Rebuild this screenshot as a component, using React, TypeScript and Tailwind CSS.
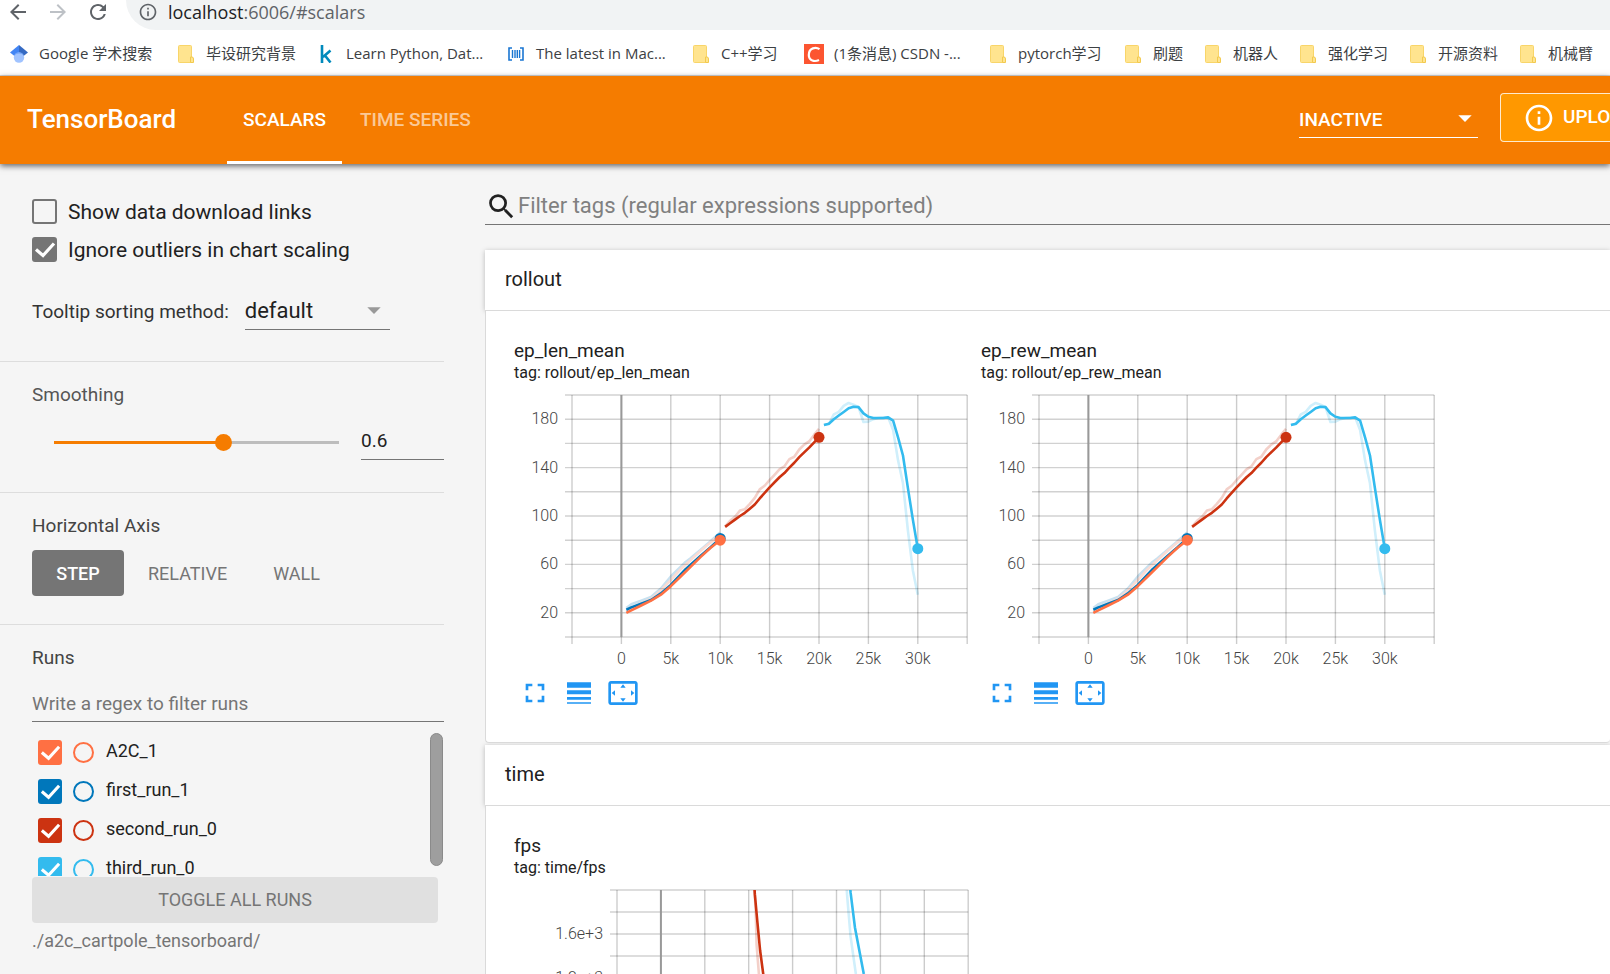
import { useState } from "react";
import type { ReactNode } from "react";
import {
  MdArrowBack,
  MdArrowDropDown,
  MdArrowForward,
  MdFullscreen,
  MdInfoOutline,
  MdLineWeight,
  MdRefresh,
  MdSearch,
  MdSettingsOverscan,
} from "react-icons/md";

type Point = [number, number];

type Series = {
  color: string;
  faded: string;
  raw: Point[];
  smooth: Point[];
  dot?: boolean;
};

type Axis = {
  left: number;
  stepX: number;
  stepY: number;
  rows: number;
  // value of the bottom line and value between two lines
  minY: number;
  unitY: number;
  labelsY: [number, string][];
};

const RUNS = [
  { name: "A2C_1", box: "bg-[#ff7043]", ring: "border-[#ff7043]" },
  { name: "first_run_1", box: "bg-[#0077bb]", ring: "border-[#0077bb]" },
  { name: "second_run_0", box: "bg-[#cc3311]", ring: "border-[#cc3311]" },
  { name: "third_run_0", box: "bg-[#33bbee]", ring: "border-[#33bbee]" },
];

const ROLLOUT: Series[] = [
  {
    color: "#0077bb",
    faded: "#c8e1f0",
    dot: true,
    raw: [[0.5, 24], [1, 27], [2, 30], [3, 33], [4, 40], [5, 50], [6.5, 62], [7, 65], [8, 72], [9, 79], [10, 86.5]],
    smooth: [[0.5, 22.5], [1, 24.5], [2, 27.5], [3, 30.5], [4, 36], [5, 43], [6.5, 56], [8, 67], [9, 74], [10, 81.5]],
  },
  {
    color: "#ff7043",
    faded: "#fbdcd4",
    dot: true,
    raw: [[0.5, 21], [2, 28], [3, 31.5], [4, 38.5], [5, 47], [6, 56], [7, 63.5], [8, 71], [9, 78], [10, 84.5]],
    smooth: [[0.5, 20], [1, 22], [2, 26], [3, 30], [4, 35], [5, 42], [6, 50], [7, 58], [8, 66], [9, 73.5], [10, 80]],
  },
  {
    color: "#cc3311",
    faded: "#f3d0c9",
    dot: true,
    raw: [
      [10.5, 91.5], [11, 96], [11.5, 99.3], [12, 104.5], [12.5, 105.6], [13, 110], [13.5, 115], [14, 122],
      [14.5, 125], [15, 129.6], [15.5, 134], [16, 138.5], [16.5, 141], [17, 147], [17.5, 149], [18, 155],
      [18.5, 159], [19, 161.6], [19.5, 167], [20, 172],
    ],
    smooth: [
      [10.5, 91], [11, 94], [11.5, 97], [12, 100], [12.5, 102.6], [13, 106], [13.5, 109.5], [14, 114.5],
      [15, 123.6], [16, 132], [16.5, 135.5], [17, 140], [17.5, 144], [18, 148.7], [19, 156.5], [20, 165],
    ],
  },
  {
    color: "#33bbee",
    faded: "#d0effb",
    dot: true,
    raw: [
      [20.5, 175.2], [21, 176], [21.5, 184], [22, 186], [22.5, 191], [23, 193.4], [23.5, 192], [24, 190],
      [24.5, 177.7], [25, 178], [25.5, 180], [26, 181], [27, 181.5], [27.5, 171], [28, 146], [28.5, 127],
      [29, 88], [29.5, 55], [30, 35],
    ],
    smooth: [
      [20.5, 175.2], [21, 176.3], [21.5, 180], [22, 183], [22.5, 186], [23, 189], [23.5, 190.3], [24, 190],
      [24.5, 184.8], [25, 182], [25.5, 181], [26.5, 181], [27, 181.5], [27.5, 178.8], [28, 165], [28.5, 150],
      [29, 123], [29.5, 97], [30, 73],
    ],
  },
];

const FPS: Series[] = [
  {
    color: "#cc3311",
    faded: "#f3d0c9",
    raw: [[10.6, 2100], [10.8, 1800], [10.9, 1500], [11.2, 1200], [11.6, 900]],
    smooth: [[10.6, 2100], [10.7, 1960], [11, 1700], [11.3, 1450], [11.65, 1240], [12.2, 950]],
  },
  {
    color: "#33bbee",
    faded: "#d0effb",
    raw: [[21.1, 2100], [21.2, 1960], [21.6, 1580], [22.2, 1240], [22.8, 950]],
    smooth: [[21.5, 2100], [21.6, 1980], [22.1, 1660], [23.1, 1240], [23.9, 950]],
  },
];

const ROLLOUT_AXIS: Axis = {
  left: 58,
  stepX: 49.4,
  stepY: 24.2,
  rows: 10,
  minY: 0,
  unitY: 20,
  labelsY: [[180, "180"], [140, "140"], [100, "100"], [60, "60"], [20, "20"]],
};

const FPS_AXIS: Axis = {
  left: 103,
  stepX: 43.9,
  stepY: 22,
  rows: 11,
  minY: -200,
  unitY: 200,
  labelsY: [[1600, "1.6e+3"], [1200, "1.2e+3"], [800, "800"], [400, "400"], [0, "0"]],
};

const COLUMNS = [-5, 0, 5, 10, 15, 20, 25, 30, 35];
const PLOT_TOP = 11;

function Chart({ id, series, axis }: { id: string; series: Series[]; axis: Axis }) {
  const bottom = PLOT_TOP + axis.rows * axis.stepY;
  const right = axis.left + 8 * axis.stepX;
  const x = (v: number) => axis.left + ((v + 5) / 5) * axis.stepX;
  const y = (v: number) => bottom - ((v - axis.minY) / axis.unitY) * axis.stepY;
  const line = (points: Point[]) => points.map(([a, b]) => `${x(a)},${y(b)}`).join(" ");

  return (
    <svg width="456" height="292" viewBox="0 0 456 292" className="block" role="img" aria-label={id}>
      <clipPath id={id}>
        <rect x={axis.left} y={PLOT_TOP} width={right - axis.left} height={bottom - PLOT_TOP} />
      </clipPath>
      <g clipPath={`url(#${id})`} fill="none" strokeWidth="2.6" strokeLinejoin="round">
        {series.map((s) => (
          <polyline key={s.color} points={line(s.raw)} stroke={s.faded} />
        ))}
      </g>
      {COLUMNS.map((c) => (
        <line
          key={c}
          x1={x(c)}
          x2={x(c)}
          y1={PLOT_TOP}
          y2={bottom + 7}
          stroke="#000"
          strokeOpacity="0.2"
          strokeWidth="1.4"
        />
      ))}
      {Array.from({ length: axis.rows + 1 }, (_, i) => (
        <line
          key={i}
          x1={axis.left - 7}
          x2={right}
          y1={PLOT_TOP + i * axis.stepY}
          y2={PLOT_TOP + i * axis.stepY}
          stroke="#000"
          strokeOpacity="0.18"
          strokeWidth="1.4"
        />
      ))}
      <line x1={x(0)} x2={x(0)} y1={PLOT_TOP} y2={bottom} stroke="#999" strokeWidth="2" />
      <g clipPath={`url(#${id})`} fill="none" strokeWidth="2.6" strokeLinejoin="round">
        {series.map((s) => (
          <polyline key={s.color} points={line(s.smooth)} stroke={s.color} />
        ))}
      </g>
      {series
        .filter((s) => s.dot)
        .map((s) => {
          const [a, b] = s.smooth[s.smooth.length - 1];
          return <circle key={s.color} cx={x(a)} cy={y(b)} r="5.5" fill={s.color} />;
        })}
      <g className="fill-[#444] text-[16px] font-light">
        {axis.labelsY.map(([v, label]) => (
          <text key={label} x={axis.left - 14} y={y(v) + 5} textAnchor="end">
            {label}
          </text>
        ))}
        {COLUMNS.slice(1, 8).map((c) => (
          <text key={c} x={x(c)} y={bottom + 27} textAnchor="middle">
            {c === 0 ? "0" : `${c}k`}
          </text>
        ))}
      </g>
    </svg>
  );
}

function ChartCard({
  title,
  tag,
  series,
  axis,
}: {
  title: string;
  tag: string;
  series: Series[];
  axis: Axis;
}) {
  return (
    <div className="w-[467px] shrink-0">
      <h3 className="text-[19px] leading-[22px]">{title}</h3>
      <p className="text-[16px] leading-[22px]">tag: {tag}</p>
      <Chart id={title} series={series} axis={axis} />
      <div className="flex gap-3 pt-[1px] pl-[5px] text-[#2196f3]">
        <button type="button" aria-label="Toggle full size">
          <MdFullscreen size={32} />
        </button>
        <button type="button" aria-label="Toggle log scale">
          <MdLineWeight size={32} />
        </button>
        <button type="button" aria-label="Fit domain to data">
          <MdSettingsOverscan size={32} />
        </button>
      </div>
    </div>
  );
}

function Category({ name, children }: { name: string; children: ReactNode }) {
  return (
    <section className="mb-[2px]">
      <button
        type="button"
        className="block h-[60px] w-full bg-white pb-[2px] pl-5 text-left text-[20px] shadow-[0_1px_5px_rgba(0,0,0,0.25)]"
      >
        {name}
      </button>
      <div className="relative flex rounded-b-sm border border-r-0 border-[#dadada] bg-white pt-[29px] pb-[33px] pl-7">
        {children}
      </div>
    </section>
  );
}

function Tick() {
  return (
    <svg viewBox="0 0 25 25" className="pointer-events-none absolute inset-0 size-full">
      <path d="M4 12.5l7 6L22 6.5" fill="none" stroke="#fff" strokeWidth="3.2" />
    </svg>
  );
}

function Option({ label, initial }: { label: string; initial: boolean }) {
  const [checked, setChecked] = useState(initial);
  return (
    <label className="flex h-[25px] items-center gap-[11px] text-[21px]">
      <span className="relative size-[25px] shrink-0">
        <input
          type="checkbox"
          checked={checked}
          onChange={() => setChecked(!checked)}
          className="block size-full appearance-none rounded-[3px] border-2 border-[#757575] checked:bg-[#757575]"
        />
        {checked && <Tick />}
      </span>
      {label}
    </label>
  );
}

function RunRow({ run }: { run: (typeof RUNS)[number] }) {
  const [checked, setChecked] = useState(true);
  return (
    <div className="flex h-[25px] shrink-0 items-center pl-[6px]">
      <span className="relative h-[25px] w-6 shrink-0">
        <input
          id={run.name}
          type="checkbox"
          checked={checked}
          onChange={() => setChecked(!checked)}
          className={`block size-full appearance-none rounded-[3px] ${run.box}`}
        />
        {checked && <Tick />}
      </span>
      <input
        type="radio"
        name="isolate"
        aria-label={`Isolate ${run.name}`}
        className={`ml-[11px] size-[21px] appearance-none rounded-full border-2 ${run.ring}`}
      />
      <label htmlFor={run.name} className="ml-3 pb-1 text-[18px]">
        {run.name}
      </label>
    </div>
  );
}

function Folder() {
  return (
    <svg viewBox="0 0 16 18" className="h-[18px] w-4">
      <rect x="0.5" y="0.5" width="13" height="17" rx="1" fill="#ffe48f" stroke="#f8d569" />
      <path d="M12.5 12h1.5q1.5 0 1.5 2v3.5h-3z" fill="#ffe48f" stroke="#f3ca4e" />
    </svg>
  );
}

function ScholarLogo() {
  return (
    <svg viewBox="0 0 18 18" className="size-[18px]">
      <path d="M9 0L0 7.5l4.5 3.6L9 8z" fill="#4285f4" />
      <path d="M9 0l9 7.5-4.5 3.6L9 8z" fill="#356ac3" />
      <circle cx="9" cy="12.6" r="5.2" fill="#a0c3ff" />
      <path d="M4.2 10.3a5.3 5.3 0 0 1 9.6 0 8 8 0 0 0-9.6 0z" fill="#76a7fa" />
    </svg>
  );
}

function KaggleLogo() {
  return (
    <svg viewBox="0 0 12 18" className="h-[18px] w-3">
      <path d="M2 0v18M10.5 5.5L3 12M5 10.5l5.5 7" fill="none" stroke="#008abc" strokeWidth="2.6" />
    </svg>
  );
}

function BarsLogo() {
  return (
    <svg viewBox="0 0 16 14" className="h-[14px] w-4">
      <path d="M4 1H1v12h3M12 1h3v12h-3" fill="none" stroke="#1976d2" strokeWidth="1.6" />
      <path d="M4.5 3v8M7 3v8M9.3 3v8M11.6 3v8" stroke="#1976d2" strokeWidth="1.4" />
    </svg>
  );
}

function CsdnLogo() {
  return (
    <svg viewBox="0 0 20 20" className="size-5">
      <rect width="20" height="20" fill="#fc5531" />
      <path d="M15.5 5.2C12 2.6 4.8 3.6 4.8 11c0 6 6 7 10.2 5" fill="none" stroke="#fff" strokeWidth="2.2" />
    </svg>
  );
}

const BOOKMARKS: { icon: ReactNode; label: string; width?: string }[] = [
  { icon: <ScholarLogo />, label: "Google 学术搜索", width: "w-[117px]" },
  { icon: <Folder />, label: "毕设研究背景" },
  { icon: <KaggleLogo />, label: "Learn Python, Dat...", width: "w-[140px]" },
  { icon: <BarsLogo />, label: "The latest in Mac...", width: "w-[135px]" },
  { icon: <Folder />, label: "C++学习", width: "w-[63px]" },
  { icon: <CsdnLogo />, label: "(1条消息) CSDN -...", width: "w-[134px]" },
  { icon: <Folder />, label: "pytorch学习", width: "w-[85px]" },
  { icon: <Folder />, label: "刷题" },
  { icon: <Folder />, label: "机器人" },
  { icon: <Folder />, label: "强化学习" },
  { icon: <Folder />, label: "开源资料" },
  { icon: <Folder />, label: "机械臂" },
];

function BrowserBar() {
  return (
    <div className="shrink-0 border-b border-[#d5d7da] bg-white font-['Open_Sans','Noto_Sans_CJK_SC',sans-serif]">
      <div className="flex h-[30px] items-start text-[#5f6368]">
        <div className="flex w-[126px] shrink-0 gap-4 pl-[6px]">
          <button type="button" aria-label="Back">
            <MdArrowBack size={24} />
          </button>
          <button type="button" aria-label="Forward" className="text-[#bdc1c6]">
            <MdArrowForward size={24} />
          </button>
          <button type="button" aria-label="Reload">
            <MdRefresh size={24} />
          </button>
        </div>
        <div className="flex h-[30px] flex-1 items-start gap-[10px] rounded-bl-full bg-[#f1f3f4] pt-[2px] pl-3">
          <MdInfoOutline size={20} />
          <p className="text-[18px] leading-5 text-[#5f6368]">
            <span className="text-[#202124]">localhost</span>:6006/#scalars
          </p>
        </div>
      </div>
      <nav className="flex h-[45px] items-center gap-5 overflow-hidden pt-[2px] pl-[9px]">
        {BOOKMARKS.map((b) => (
          <a
            key={b.label}
            href="#"
            className="flex shrink-0 items-center gap-[10px] text-[15px] whitespace-nowrap text-[#3c4043]"
          >
            <span className="flex w-5 justify-center">{b.icon}</span>
            <span className={b.width}>{b.label}</span>
          </a>
        ))}
      </nav>
    </div>
  );
}

function Header() {
  return (
    <header className="relative z-10 flex h-[88px] shrink-0 items-center bg-[#f57c00] text-[19px] font-medium text-white shadow-[0_2px_6px_rgba(0,0,0,0.6)]">
      <h1 className="w-[227px] shrink-0 pb-[2px] pl-[27px] text-[26px]">TensorBoard</h1>
      <nav className="flex h-full">
        <button type="button" className="border-b-[3px] border-white px-4 pt-[3px]">
          SCALARS
        </button>
        <button type="button" className="px-[18px] text-white/60">
          TIME SERIES
        </button>
      </nav>
      <div className="relative ml-auto w-[179px] shrink-0">
        <select
          aria-label="Inactive plugins"
          className="block h-9 w-full appearance-none border-b border-white bg-transparent pt-[2px]"
        >
          <option>INACTIVE</option>
        </select>
        <MdArrowDropDown size={32} className="pointer-events-none absolute top-0 -right-[3px]" />
      </div>
      <button
        type="button"
        className="mt-[17px] ml-[22px] flex h-[49px] w-[110px] shrink-0 items-center gap-2 self-start overflow-hidden rounded-l-[4px] border border-r-0 border-white/80 bg-[#ff9800] pl-[22px]"
      >
        <MdInfoOutline size={32} className="shrink-0" />
        UPLOAD
      </button>
    </header>
  );
}

function Sidebar() {
  const [smoothing, setSmoothing] = useState(0.6);
  const fill = `linear-gradient(to right, #f57c00 ${smoothing * 100}%, #bdbdbd ${smoothing * 100}%)`;

  return (
    <aside className="w-[444px] shrink-0 text-[19px] leading-6 text-[#212121]">
      <div className="border-b border-[#dddddd] pt-[35px] pb-[31px] pl-8">
        <div className="flex flex-col gap-[13px]">
          <Option label="Show data download links" initial={false} />
          <Option label="Ignore outliers in chart scaling" initial={true} />
        </div>
        <div className="mt-8 flex items-center gap-4">
          <label htmlFor="sorting" className="text-[#333]">
            Tooltip sorting method:
          </label>
          <div className="relative w-[145px]">
            <select
              id="sorting"
              className="block h-9 w-full appearance-none border-b border-[#757575] bg-transparent pb-[2px] text-[22px]"
            >
              <option>default</option>
            </select>
            <MdArrowDropDown
              size={32}
              className="pointer-events-none absolute top-0 right-0 text-[#999]"
            />
          </div>
        </div>
      </div>

      <div className="border-b border-[#dddddd] pt-[21px] pb-8 pl-8">
        <label htmlFor="smoothing" className="block text-[#555]">
          Smoothing
        </label>
        <div className="mt-[17px] flex items-center pl-[22px]">
          <input
            id="smoothing"
            type="range"
            min={0}
            max={1}
            step={0.001}
            value={smoothing}
            onChange={(e) => setSmoothing(Number(e.target.value))}
            style={{ background: fill }}
            className="h-[3px] min-w-0 flex-1 appearance-none [&::-webkit-slider-thumb]:size-[17px] [&::-webkit-slider-thumb]:appearance-none [&::-webkit-slider-thumb]:rounded-full [&::-webkit-slider-thumb]:bg-[#f57c00]"
          />
          <input
            type="text"
            aria-label="Smoothing value"
            value={smoothing}
            onChange={(e) => setSmoothing(Number(e.target.value) || 0)}
            className="ml-[22px] h-9 w-[83px] border-b border-[#757575] pb-[2px]"
          />
        </div>
      </div>

      <div className="border-b border-[#dddddd] pt-[21px] pb-7 pl-8">
        <h2 className="text-[#444]">Horizontal Axis</h2>
        <div className="mt-3 flex h-[46px] text-[18px] text-[#757575]">
          <button
            type="button"
            className="w-[92px] rounded-[4px] bg-[#757575] pt-[2px] font-medium text-white"
          >
            STEP
          </button>
          <button type="button" className="px-6 pt-[2px]">
            RELATIVE
          </button>
          <button type="button" className="px-[22px] pt-[2px]">
            WALL
          </button>
        </div>
      </div>

      <div className="pt-[21px] pl-8">
        <h2 className="text-[#444]">Runs</h2>
        <input
          type="text"
          aria-label="Filter runs"
          placeholder="Write a regex to filter runs"
          className="mt-4 block h-9 w-full border-b border-[#757575] placeholder:text-[#757575]"
        />
        <div className="flex h-[154px] overflow-hidden">
          <div className="flex flex-1 flex-col gap-[14px] pt-[18px]">
            {RUNS.map((run) => (
              <RunRow key={run.name} run={run} />
            ))}
          </div>
          <div className="mt-[11px] mr-[1px] h-[133px] w-[13px] rounded-full border border-[#8a8a8a] bg-[#9e9e9e]" />
        </div>
        <div className="pt-[1px] pr-[6px]">
          <button type="button" className="h-[46px] w-full rounded-[4px] bg-[#e0e0e0] text-[18px] text-[#757575]">
            TOGGLE ALL RUNS
          </button>
        </div>
        <p className="mt-[6px] text-[18px] text-[#757575]">./a2c_cartpole_tensorboard/</p>
      </div>
    </aside>
  );
}

export default function App() {
  return (
    <div className="flex h-screen flex-col overflow-hidden bg-[#f5f5f5] font-[Roboto,sans-serif] text-[#212121]">
      <BrowserBar />
      <Header />
      <div className="flex min-h-0 flex-1 overflow-hidden">
        <Sidebar />
        <main className="ml-[41px] min-w-0 flex-1 pt-6">
          <div className="mb-[25px] flex h-[37px] items-center border-b border-[#757575]">
            <MdSearch size={33} className="shrink-0" />
            <input
              type="text"
              aria-label="Filter tags"
              placeholder="Filter tags (regular expressions supported)"
              className="h-full flex-1 pb-[2px] text-[22px] placeholder:text-[#808080]"
            />
          </div>
          <Category name="rollout">
            <ChartCard
              title="ep_len_mean"
              tag="rollout/ep_len_mean"
              series={ROLLOUT}
              axis={ROLLOUT_AXIS}
            />
            <ChartCard
              title="ep_rew_mean"
              tag="rollout/ep_rew_mean"
              series={ROLLOUT}
              axis={ROLLOUT_AXIS}
            />
          </Category>
          <Category name="time">
            <ChartCard title="fps" tag="time/fps" series={FPS} axis={FPS_AXIS} />
          </Category>
        </main>
      </div>
    </div>
  );
}
